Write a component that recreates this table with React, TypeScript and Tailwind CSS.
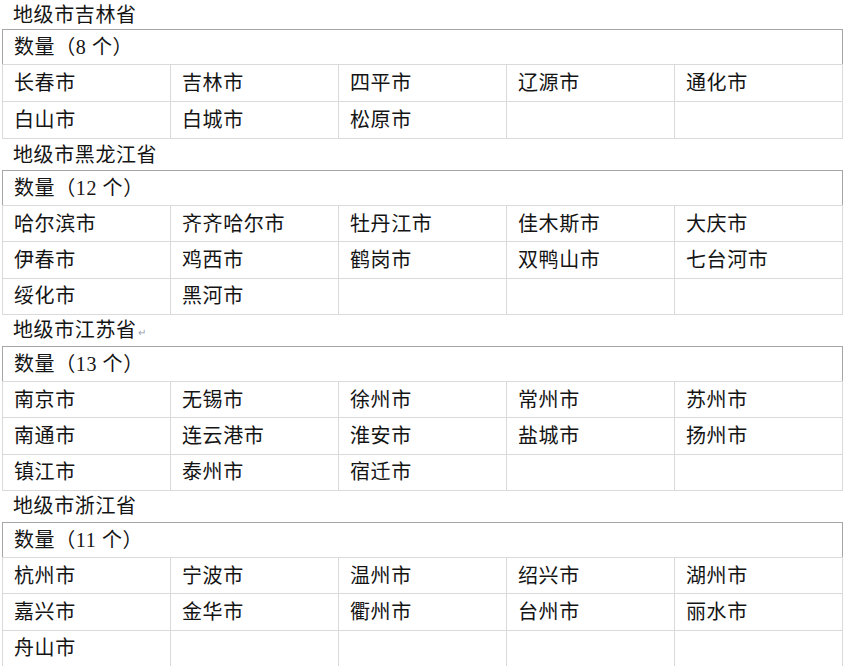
const PROVINCES = [
  {
    name: "地级市吉林省",
    count: 8,
    cities: ["长春市", "吉林市", "四平市", "辽源市", "通化市", "白山市", "白城市", "松原市"],
  },
  {
    name: "地级市黑龙江省",
    count: 12,
    cities: [
      "哈尔滨市", "齐齐哈尔市", "牡丹江市", "佳木斯市", "大庆市",
      "伊春市", "鸡西市", "鹤岗市", "双鸭山市", "七台河市",
      "绥化市", "黑河市",
    ],
  },
  {
    name: "地级市江苏省",
    count: 13,
    mark: true,
    cities: [
      "南京市", "无锡市", "徐州市", "常州市", "苏州市",
      "南通市", "连云港市", "淮安市", "盐城市", "扬州市",
      "镇江市", "泰州市", "宿迁市",
    ],
  },
  {
    name: "地级市浙江省",
    count: 11,
    cities: [
      "杭州市", "宁波市", "温州市", "绍兴市", "湖州市",
      "嘉兴市", "金华市", "衢州市", "台州市", "丽水市",
      "舟山市",
    ],
  },
];

function Section({ p, first }: { p: (typeof PROVINCES)[number]; first: boolean }) {
  // pad to full rows of 5
  const cells = [...p.cities];
  while (cells.length % 5 !== 0) cells.push("");

  return (
    <div>
      <div className={`${first ? "h-[29px]" : "h-[31px]"} flex items-center pl-[13px]`}>
        {p.name}
        {p.mark && <span className="text-[10px] text-gray-400 ml-[1px] mt-[6px]">↵</span>}
      </div>
      <div className="ml-[2px] w-[841px]">
        <div className="h-[35px] flex items-center pl-[11px] border-t border-l border-r border-[#a6a6a6]">
          数量（{p.count} 个）
        </div>
        <div className="grid grid-cols-5 border-l border-b border-[#dadada]">
          {cells.map((c, i) => (
            <div
              key={i}
              className={`${first ? "h-[37px]" : "h-[36.33px]"} flex items-center pl-[11px] border-t border-r border-[#dadada]`}
            >
              {c}
            </div>
          ))}
        </div>
      </div>
    </div>
  );
}

export default function App() {
  return (
    <div
      className="w-[845px] h-[666px] overflow-hidden bg-white text-[20px] leading-none tracking-[0.6px] text-[#141414]"
      style={{ fontFamily: '"Liberation Serif", "Noto Sans CJK SC", serif' }}
    >
      {PROVINCES.map((p, i) => (
        <Section key={p.name} p={p} first={i === 0} />
      ))}
    </div>
  );
}
